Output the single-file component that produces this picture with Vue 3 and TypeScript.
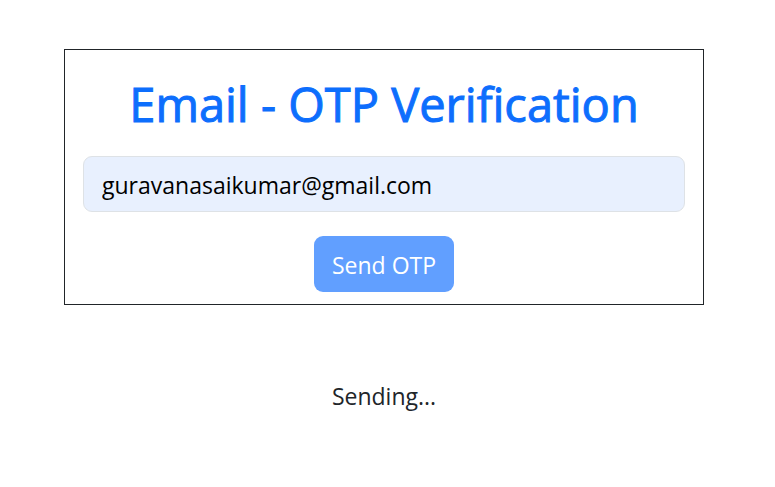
<script setup lang="ts">
import { ref } from 'vue'

const email = ref<string>('guravanasaikumar@gmail.com')
const sending = ref<boolean>(true)

function sendOtp(): void {
  sending.value = true
}
</script>

<template>
  <main class="page">
    <form class="card" @submit.prevent="sendOtp">
      <h1 class="title">Email - OTP Verification</h1>
      <input v-model="email" class="field" type="email" aria-label="Email" />
      <button class="send" type="submit" :disabled="sending">Send OTP</button>
    </form>
    <p v-if="sending" class="status" role="status">Sending...</p>
  </main>
</template>

<style>
body {
  background: #fff;
}
</style>

<style scoped>
.page {
  display: flex;
  flex-direction: column;
  align-items: center;
  padding: 49px 71px 0 64px;
  font-family: 'Segoe UI', 'Open Sans', 'Noto Sans', sans-serif;
  font-size: 23px;
  line-height: 36px;
  color: #212529;
}

.card {
  box-sizing: border-box;
  width: 100%;
  display: flex;
  flex-direction: column;
  align-items: center;
  padding: 26px 18px 12px;
  border: 1px solid #212529;
}

.title {
  margin: 0 0 24px;
  font-size: 47px;
  font-weight: 500;
  line-height: 56px;
  color: #0d6efd;
  -webkit-text-stroke: 1px #0d6efd;
  white-space: nowrap;
}

.field {
  box-sizing: border-box;
  width: 100%;
  height: 56px;
  margin: 0 0 24px;
  padding: 2px 18px 0;
  border: 1px solid #dee2e6;
  border-radius: 9px;
  background: #e8f0fe;
  color: #000;
  font: inherit;
}

.send {
  height: 56px;
  padding: 2px 18px 0;
  border: 0;
  border-radius: 9px;
  background: #619fff;
  color: #fff;
  font: inherit;
}

.status {
  margin: 73px 0 0;
}
</style>
